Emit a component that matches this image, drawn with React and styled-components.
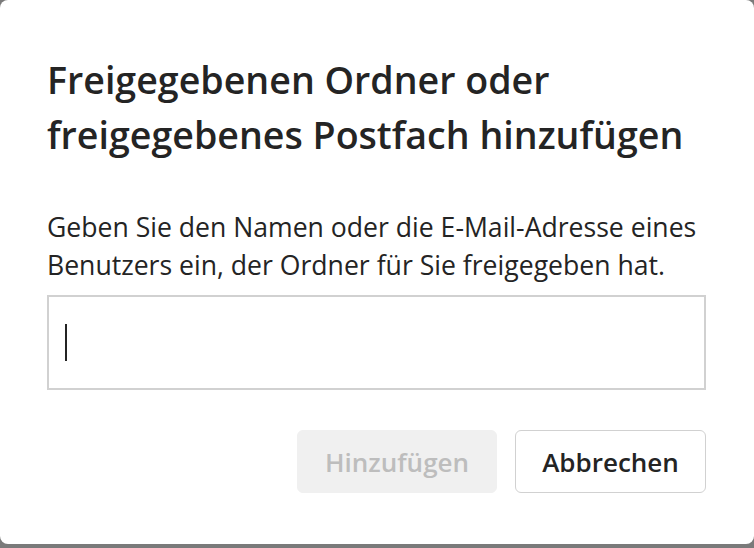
import React from 'react'
import styled, { createGlobalStyle } from 'styled-components'

const GlobalStyle = createGlobalStyle`
    html, body {
        margin: 0;
        padding: 0;
        background: #7a7a7a;
    }
    body {
        font-family: "Segoe UI", "Open Sans", "Noto Sans", sans-serif;
    }
`

const Dialog = styled.div`
    box-sizing: border-box;
    width: 754px;
    height: 544px;
    background: #ffffff;
    border-radius: 8px;
    padding: 52px 48px 0 47px;
    display: flex;
    flex-direction: column;
`

const Title = styled.h1`
    margin: 0;
    font-size: 37.6px;
    font-weight: 600;
    line-height: 55px;
    color: #242424;
`

const Description = styled.p`
    margin: 46px 0 11px;
    font-size: 26.6px;
    line-height: 38px;
    color: #242424;
    white-space: nowrap;
`

const Field = styled.div`
    box-sizing: border-box;
    height: 95px;
    border: 2px solid #d1d1d1;
    display: flex;
    align-items: center;
    padding-left: 16px;
`

const Caret = styled.span`
    width: 2px;
    height: 37px;
    background: #242424;
`

const Actions = styled.div`
    display: flex;
    justify-content: flex-end;
    gap: 18px;
    margin-top: 40px;
`

const Button = styled.button`
    box-sizing: border-box;
    height: 63px;
    padding: 0;
    border-radius: 6px;
    font-family: inherit;
    font-size: 26px;
    font-weight: 600;
    border: 1px solid ${(p) => (p.$disabled ? '#f0f0f0' : '#d1d1d1')};
    background: ${(p) => (p.$disabled ? '#f0f0f0' : '#ffffff')};
    color: ${(p) => (p.$disabled ? '#bdbdbd' : '#242424')};
    width: ${(p) => p.$width}px;
`

const App = () => {
    return (
        <>
            <GlobalStyle />
            <Dialog>
                <Title>
                    Freigegebenen Ordner oder
                    <br />
                    freigegebenes Postfach hinzufügen
                </Title>
                <Description>
                    Geben Sie den Namen oder die E-Mail-Adresse eines
                    <br />
                    Benutzers ein, der Ordner für Sie freigegeben hat.
                </Description>
                <Field>
                    <Caret />
                </Field>
                <Actions>
                    <Button $disabled $width={200}>Hinzufügen</Button>
                    <Button $width={191}>Abbrechen</Button>
                </Actions>
            </Dialog>
        </>
    )
}

export default App
